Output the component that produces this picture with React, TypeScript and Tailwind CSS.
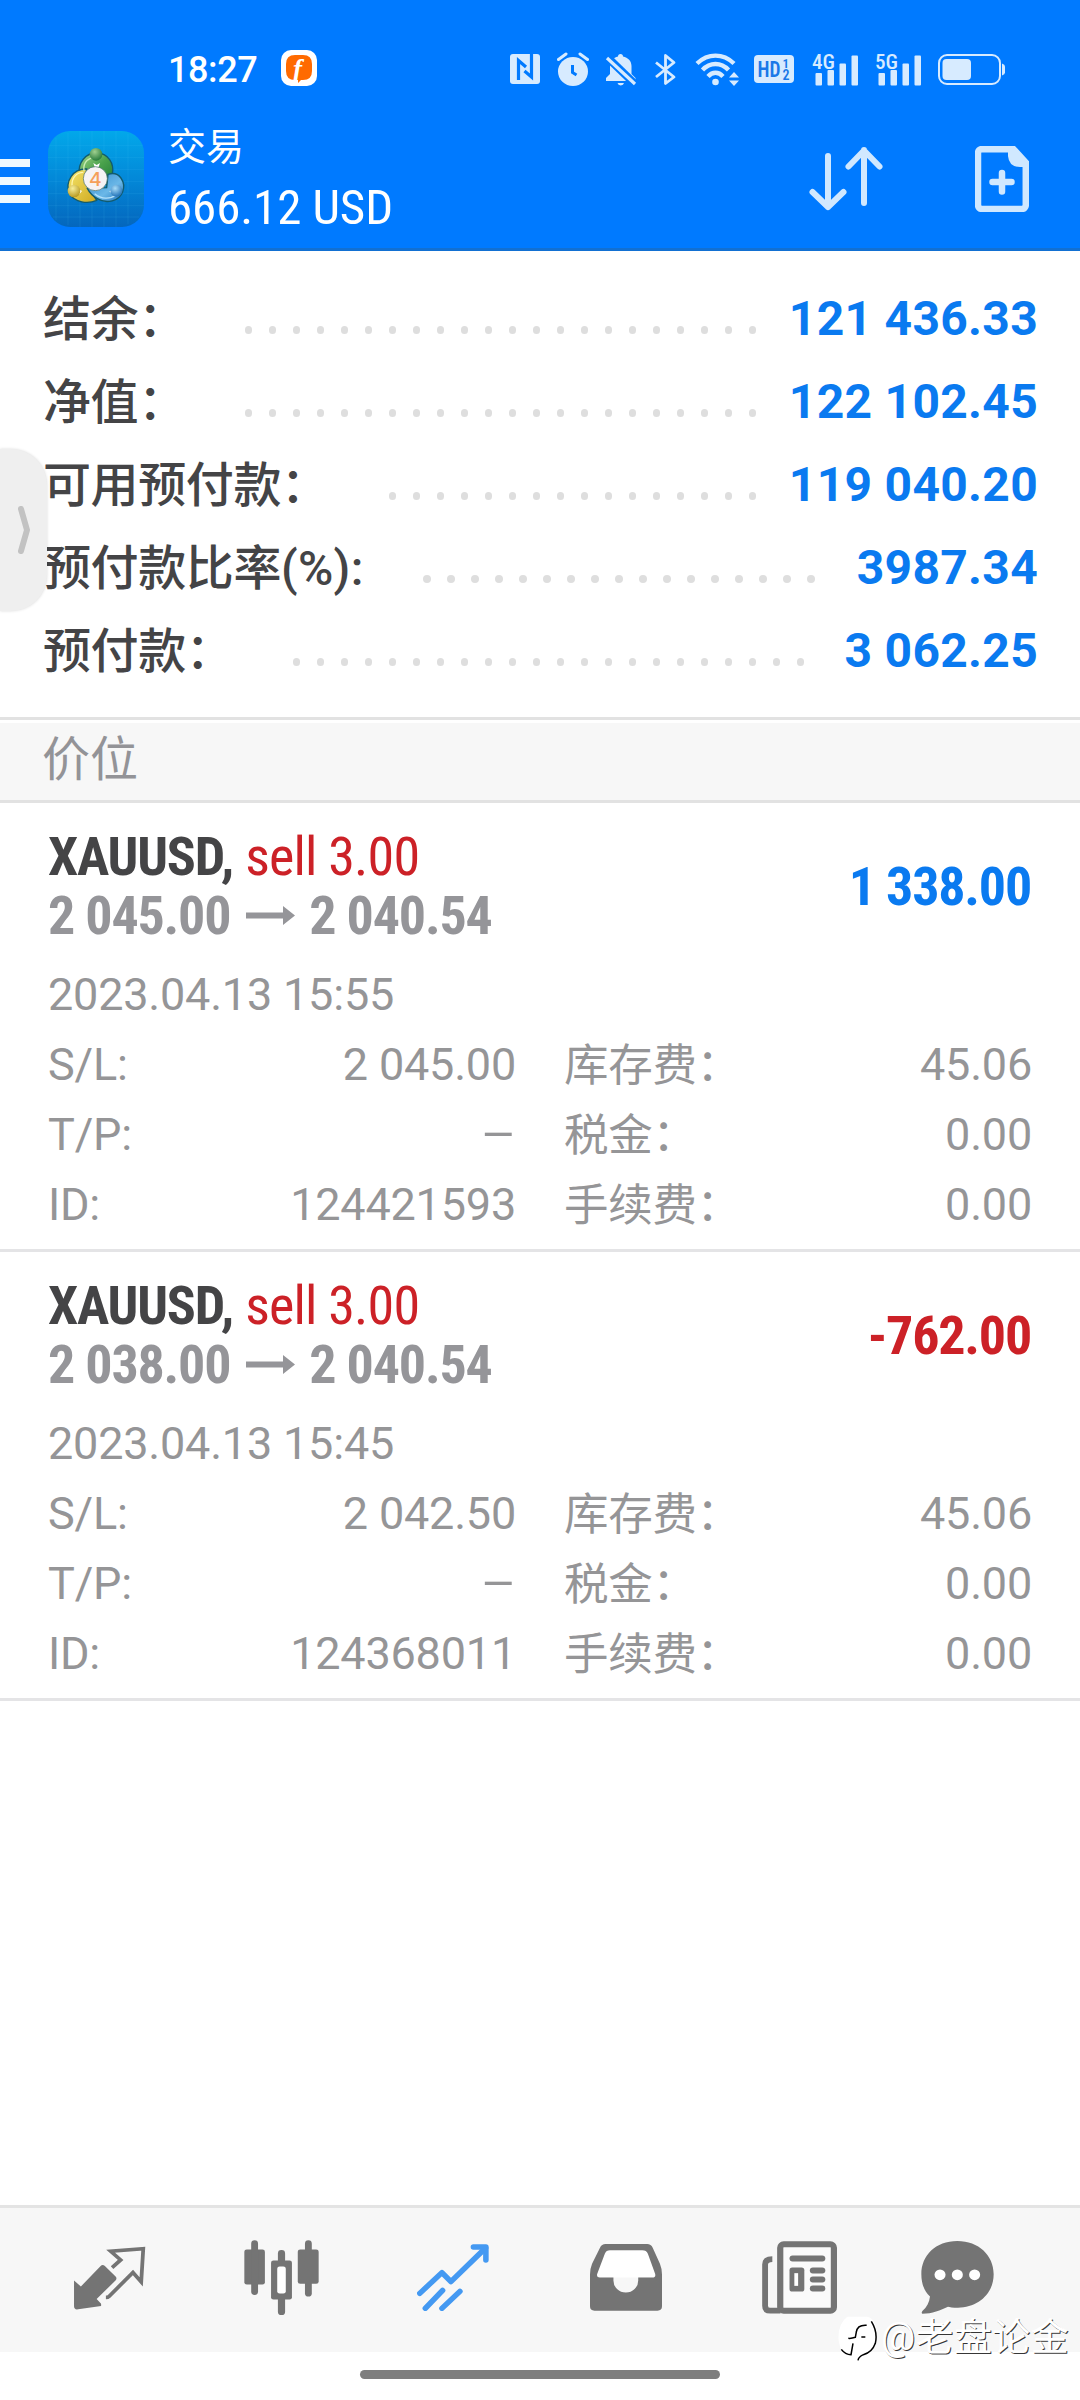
import type { ReactNode } from 'react';

const balances = [
  { label: '结余：', value: '121 436.33', dots: 22, width: 'w-[201.5px]' },
  { label: '净值：', value: '122 102.45', dots: 22, width: 'w-[201.5px]' },
  { label: '可用预付款：', value: '119 040.20', dots: 16, width: 'w-[345.5px]' },
  { label: '预付款比率', suffix: '(%):', value: '3987.34', dots: 17, width: 'w-[380px]' },
  { label: '预付款：', value: '3 062.25', dots: 22, width: 'w-[249.5px]' },
];

const positions = [
  {
    symbol: 'XAUUSD',
    side: 'sell 3.00',
    open: '2 045.00',
    current: '2 040.54',
    profit: '1 338.00',
    time: '2023.04.13 15:55',
    sl: '2 045.00',
    tp: '–',
    id: '124421593',
    swap: '45.06',
    tax: '0.00',
    fee: '0.00',
  },
  {
    symbol: 'XAUUSD',
    side: 'sell 3.00',
    open: '2 038.00',
    current: '2 040.54',
    profit: '-762.00',
    time: '2023.04.13 15:45',
    sl: '2 042.50',
    tp: '–',
    id: '124368011',
    swap: '45.06',
    tax: '0.00',
    fee: '0.00',
  },
];

function NfcIcon() {
  return (
    <svg className="w-[30px] h-[30px]" viewBox="0 0 30 30" fill="none">
      <rect width="30" height="30" rx="3" fill="#d7ebff" />
      <path d="M8.5 26V6.5L16 13" stroke="#007aff" strokeWidth="3.2" />
      <path d="M21.5 0V23L14.5 17" stroke="#007aff" strokeWidth="3.2" />
    </svg>
  );
}

function AlarmIcon() {
  return (
    <svg className="w-8 h-[34px] ml-[17px]" viewBox="0 0 32 34" fill="none">
      <ellipse cx="16" cy="19.5" rx="15" ry="14.5" fill="#d7ebff" />
      <path d="M1.5 7.5L9 2M30.5 7.5L23 2" stroke="#d7ebff" strokeWidth="3" strokeLinecap="round" />
      <path d="M15.5 13V20.5L19.5 23" stroke="#007aff" strokeWidth="3" />
    </svg>
  );
}

function MutedIcon() {
  return (
    <svg className="w-8 h-[33px] ml-4" viewBox="0 0 32 33" fill="none">
      <path d="M1 28v-3l4-4v-8c0-5 3.5-8.5 8-9.5a2.5 2.5 0 0 1 5 0c5 1 8.5 4.5 8.5 9.5v8l4 4v3z" fill="#d7ebff" />
      <path d="M12.5 30h6.5a3.3 3 0 0 1-6.5 0z" fill="#d7ebff" />
      <path d="M2 4L31 32" stroke="#007aff" strokeWidth="8" />
      <path d="M2 5L30 31" stroke="#d7ebff" strokeWidth="3.2" />
    </svg>
  );
}

function BluetoothIcon() {
  return (
    <svg className="w-[23px] h-[33px] ml-[17px]" viewBox="0 0 23 33" fill="none">
      <path d="M2 9.5L20 24L11.5 30.5V2.5L20 9.5L2 24" stroke="#d7ebff" strokeWidth="2.8" strokeLinejoin="round" />
    </svg>
  );
}

function WifiIcon() {
  return (
    <svg className="w-11 h-[34px] ml-[18px]" viewBox="0 0 44 34" fill="none">
      <path d="M2 11.5C13 1 28 1 39 11.5" stroke="#d7ebff" strokeWidth="4.4" />
      <path d="M7.5 18C15 10 26 10 33.5 18" stroke="#d7ebff" strokeWidth="4.4" />
      <path d="M13 24.5C17.5 19.5 23.5 19.5 28 24.5" stroke="#d7ebff" strokeWidth="4.4" />
      <circle cx="20.5" cy="30" r="3.3" fill="#d7ebff" />
      <path d="M34 25.5h10l-5-5.5zM34 28.5h10l-5 5.5z" fill="#d7ebff" />
    </svg>
  );
}

function HdIcon() {
  return (
    <svg className="w-10 h-7 ml-[15px]" viewBox="0 0 40 28">
      <rect width="40" height="28" rx="4" fill="#d7ebff" />
      <g fill="#1a78e8" fontFamily="Roboto Condensed" fontWeight="600">
        <text x="3.5" y="22" fontSize="22.5" textLength="23" lengthAdjust="spacingAndGlyphs">HD</text>
        <text x="28.5" y="13" fontSize="13">1</text>
        <text x="28.5" y="25" fontSize="14">2</text>
      </g>
    </svg>
  );
}

function SignalIcon({ label }: { label: string }) {
  return (
    <svg className="w-12 h-[45px]" viewBox="0 -6 48 45" fill="#d7ebff">
      <text x="0" y="15.5" fontFamily="Roboto Condensed" fontWeight="500" fontSize="20" textLength="23" lengthAdjust="spacingAndGlyphs">
        {label}
      </text>
      <rect x="3.5" y="20" width="6.5" height="12.5" rx="1" />
      <rect x="15.5" y="17" width="6.5" height="15.5" rx="1" />
      <rect x="27.5" y="10.5" width="6.5" height="22" rx="1" />
      <rect x="39.5" y="2.5" width="6.5" height="30" rx="1" />
    </svg>
  );
}

function BatteryIcon() {
  return (
    <svg className="w-[67px] h-[31px] ml-[15px]" viewBox="0 0 67 31">
      <rect x="1" y="1" width="61" height="29" rx="8" fill="none" stroke="#d7ebff" strokeWidth="2" />
      <rect x="4.5" y="5" width="28.5" height="21" rx="4" fill="#d7ebff" />
      <path d="M64 9.5q3 1 3 3v6q0 2-3 3z" fill="#d7ebff" />
    </svg>
  );
}

function FollowMeIcon() {
  return (
    <svg className="w-9 h-9 -mt-1 ml-[25px]" viewBox="0 0 36 36">
      <rect width="36" height="36" rx="10" fill="#fff" />
      <path d="M14 5h8q9 0 9 9v7q0 9-9 9h-2l-3 3v-3h-3q-9 0-9-9v-7q0-9 9-9z" fill="#ff6a00" />
      <text x="12" y="28" fontFamily="Liberation Serif" fontStyle="italic" fontWeight="700" fontSize="27" fill="#fff">
        f
      </text>
    </svg>
  );
}

function AppLogo() {
  return (
    <svg className="w-24 h-24" viewBox="0 0 288 288">
      <defs>
        <linearGradient id="tile" x1="0" y1="0" x2="0" y2="1">
          <stop offset="0" stopColor="#02a8ea" />
          <stop offset="0.5" stopColor="#0388d8" />
          <stop offset="1" stopColor="#0466bd" />
        </linearGradient>
        <linearGradient id="green" x1="0" y1="0" x2="1" y2="1">
          <stop offset="0" stopColor="#a5d68a" />
          <stop offset="0.5" stopColor="#4aa24c" />
          <stop offset="1" stopColor="#1f7a35" />
        </linearGradient>
        <linearGradient id="gold" x1="0" y1="0" x2="1" y2="1">
          <stop offset="0" stopColor="#f5e56b" />
          <stop offset="1" stopColor="#cfa91f" />
        </linearGradient>
        <linearGradient id="azure" x1="0" y1="0" x2="1" y2="1">
          <stop offset="0" stopColor="#2f86c9" />
          <stop offset="0.6" stopColor="#6bb8e8" />
          <stop offset="1" stopColor="#1b6fb8" />
        </linearGradient>
        <radialGradient id="greenBall" cx="0.4" cy="0.3" r="0.7">
          <stop offset="0" stopColor="#9fd08f" />
          <stop offset="1" stopColor="#2a7c3c" />
        </radialGradient>
        <radialGradient id="goldBall" cx="0.4" cy="0.3" r="0.7">
          <stop offset="0" stopColor="#f7ee9a" />
          <stop offset="1" stopColor="#b89a22" />
        </radialGradient>
        <radialGradient id="azureBall" cx="0.4" cy="0.3" r="0.7">
          <stop offset="0" stopColor="#a8dcf8" />
          <stop offset="1" stopColor="#2373b8" />
        </radialGradient>
      </defs>
      <rect width="288" height="288" rx="66" fill="url(#tile)" />
      <path d="M24 20V268M60 5V283M96 0V288M132 0V288M168 0V288M204 0V288M240 8V280M4 44H284M0 80H288M0 116H288M0 152H288M0 188H288M0 224H288M14 258H274" stroke="#5fd0ff" strokeOpacity="0.16" strokeWidth="2" />
      <g stroke="#125b6d" strokeWidth="4">
        <path d="M94 128C90 95 112 66 146 66C180 66 200 98 193 130C190 146 184 154 176 160L112 116Z" fill="url(#green)" />
        <path d="M64 188C50 150 76 112 116 114L110 152L146 208C120 220 80 215 64 188Z" fill="url(#gold)" />
        <path d="M180 130C216 118 234 156 224 182C214 210 176 220 148 203C134 195 124 184 118 172L176 170Z" fill="url(#azure)" />
      </g>
      <path d="M108 120C104 92 124 78 144 80" stroke="#c9ecb4" strokeWidth="4" fill="none" />
      <path d="M72 166C70 138 88 124 106 124" stroke="#fff6ae" strokeWidth="4" fill="none" />
      <path d="M140 188C160 206 188 204 204 192" stroke="#b5e2fb" strokeWidth="4" fill="none" />
      <path d="M136 96l10 6 10-6-4 12h-12zM90 172l12 8-8 10zM196 170l-12 12 12 6z" fill="#fff" />
      <circle cx="144" cy="70" r="19" fill="url(#greenBall)" />
      <circle cx="78" cy="180" r="19" fill="url(#goldBall)" />
      <circle cx="205" cy="179" r="18" fill="url(#azureBall)" />
      <circle cx="142" cy="143" r="36" fill="#f6f3f4" stroke="#3f6a63" strokeWidth="2" />
      <text x="142" y="164" textAnchor="middle" fontFamily="Inter" fontWeight="500" fontSize="58" fill="#f5a05a">
        4
      </text>
    </svg>
  );
}

function StatusBar() {
  return (
    <div className="h-12 mt-[46px] pl-[168px] flex items-center">
      <span className="w-[88px] text-[36px] leading-[48px] font-medium tracking-[-0.4px] whitespace-nowrap">18:27</span>
      <FollowMeIcon />
      <div className="ml-[193px] -mt-[2px] flex items-center">
        <NfcIcon />
        <AlarmIcon />
        <MutedIcon />
        <BluetoothIcon />
        <WifiIcon />
        <HdIcon />
        <div className="ml-[18px] flex gap-[15px]">
          <SignalIcon label="4G" />
          <SignalIcon label="5G" />
        </div>
        <BatteryIcon />
      </div>
    </div>
  );
}

function Toolbar() {
  return (
    <div className="h-[138px] mt-4 flex items-center">
      <div className="w-[30px] mt-1 flex flex-col gap-[10px]">
        <div className="h-2 bg-[#eef9ff]" />
        <div className="h-2 bg-[#eef9ff]" />
        <div className="h-2 bg-[#eef9ff]" />
      </div>
      <div className="ml-[18px]">
        <AppLogo />
      </div>
      <div className="ml-6">
        <h1 className="text-[38px] leading-[55px]">交易</h1>
        <p className="mt-[2px] font-['Roboto_Condensed'] text-[49px] leading-[62px] tracking-[-0.1px] whitespace-nowrap">666.12 USD</p>
      </div>
      <svg className="w-[76px] h-[66px] ml-auto" viewBox="0 0 76 66" fill="none" stroke="#d0e8ff" strokeWidth="6" strokeLinecap="round" strokeLinejoin="round">
        <path d="M20 10V61M4.5 46L20 61L35.5 46" />
        <path d="M56 57V4M40.5 20.5L56 4.5L71.5 20.5" />
      </svg>
      <svg className="w-[54px] h-[66px] ml-[91px] mr-[51px]" viewBox="0 0 54 66" fill="none" stroke="#d0e8ff" strokeWidth="6.5">
        <path d="M7 3.200H38.500L50.800 16.500V59a4 4 0 0 1-4 4H7a4 4 0 0 1-4-4V7a4 4 0 0 1 4-4z" />
        <path d="M33 3V10q1 11 12 11h8v-6L39 1z" fill="#d0e8ff" stroke="none" />
        <path d="M17.5 36H36.5M27 27V45.5" strokeLinecap="round" />
      </svg>
    </div>
  );
}

function Balances() {
  return (
    <section className="pt-[26px] pb-[25px] pl-[43px] pr-[42px]">
      {balances.map((row) => (
        <div key={row.label} className="h-[83px] flex items-center text-[48px] leading-[83px] whitespace-nowrap">
          <span className={`${row.width} shrink-0 mt-[2px] text-[#444446] font-[450] tracking-[-0.4px]`}>
            {row.label}
            {row.suffix && <span className="font-medium tracking-[0.3px]">{row.suffix}</span>}
          </span>
          <div className="flex gap-[16.5px] mt-[23px]">
            {Array.from({ length: row.dots }, (_, i) => (
              <i key={i} className="size-[7.5px] rounded-full bg-[#dedede]" />
            ))}
          </div>
          <span className="ml-auto font-bold text-[#0a7af0] tracking-[0.3px]">{row.value}</span>
        </div>
      ))}
    </section>
  );
}

function Detail({ label, value }: { label: ReactNode; value: ReactNode }) {
  return (
    <div className="h-[70px] flex justify-between">
      <span>{label}</span>
      <span>{value}</span>
    </div>
  );
}

function Caption({ children }: { children: string }) {
  return <span className="inline-block pt-px text-[44.5px] tracking-[-0.3px]">{children}</span>;
}

function Position({ item }: { item: (typeof positions)[number] }) {
  const loss = item.profit.startsWith('-');
  return (
    <article className="h-[449px] pt-6 pl-12 pr-12 border-b-[3px] border-[#e4e4e6] whitespace-nowrap">
      <div className="flex justify-between items-center font-['Roboto_Condensed'] text-[54px] leading-[59px] tracking-[-1.2px]">
        <div>
          <p>
            <b className="font-bold text-[#444446]">{item.symbol},</b>{' '}
            <span className="ml-px text-[#cc2127] tracking-[-0.8px]">{item.side}</span>
          </p>
          <p className="flex items-center font-bold text-[#959599]">
            {item.open}
            <svg className="w-[49px] h-[19px] ml-4 mr-[14px]" viewBox="0 0 49 19" fill="#959599">
              <path d="M0 6.5H37V0L49 9.5L37 19V12.5H0z" />
            </svg>
            {item.current}
          </p>
        </div>
        <span className={`mr-px font-bold ${loss ? 'text-[#cc2127]' : 'text-[#0a7af0]'}`}>{item.profit}</span>
      </div>

      <div className="mt-[15px] text-[45px] leading-[70px] font-normal tracking-[-0.2px] text-[#959597]">
        <p>{item.time}</p>
        <div className="grid grid-cols-[468px_468px] gap-x-12">
          <Detail label="S/L:" value={item.sl} />
          <Detail label={<Caption>库存费：</Caption>} value={item.swap} />
          <Detail label="T/P:" value={<span className="inline-block origin-right scale-x-[1.22]">{item.tp}</span>} />
          <Detail label={<Caption>税金：</Caption>} value={item.tax} />
          <Detail label="ID:" value={item.id} />
          <Detail label={<Caption>手续费：</Caption>} value={item.fee} />
        </div>
      </div>
    </article>
  );
}

function TabBar() {
  return (
    <nav className="h-[147px] pl-[73px] pb-[5px] flex items-center border-t-[3px] border-[#e4e4e4] bg-[#f7f7f7] text-[#747474]">
      {/* Quotes */}
      <svg className="w-[73px] h-16" viewBox="213 168 213 193" preserveAspectRatio="none">
        <path d="M216 272L236 290L293 229Q299 222 306 228L338 261Q342 266 337 272L282 328L295 342V349L228 359Q216 361 216 350Z" fill="currentColor" />
        <path d="M327 233L352 210L323 184L418 176L412 276L388 248L318 320Q315 323 309 323" fill="none" stroke="currentColor" strokeWidth="11" />
      </svg>
      {/* Charts */}
      <svg className="w-[75px] h-[75px] ml-[98px]" viewBox="708 152 219 224" preserveAspectRatio="none" fill="currentColor">
        <rect x="709" y="180" width="60" height="105" rx="7" />
        <rect x="729" y="153" width="20" height="163" rx="10" />
        <rect x="865" y="180" width="61" height="103" rx="7" />
        <rect x="886" y="153" width="20" height="168" rx="10" />
        <rect x="807" y="182" width="21" height="50" rx="10" />
        <rect x="807" y="320" width="21" height="56" rx="10" />
        <rect x="787" y="213" width="61" height="117" rx="7" />
        <rect x="805" y="231" width="25" height="81" rx="7" fill="#fff" />
      </svg>
      {/* Trade */}
      <svg className="w-[72px] h-[67px] ml-[98px]" viewBox="1213 160 208 201" preserveAspectRatio="none" fill="none" stroke="#4499f2" strokeWidth="16" strokeLinecap="round" strokeLinejoin="round">
        <path d="M1221 308L1285 246L1311 273L1411 172" />
        <path d="M1376 169H1412V208" />
        <path d="M1237 353L1287 299M1285 353L1337 302" />
      </svg>
      {/* History */}
      <svg className="w-[72px] h-[67px] ml-[101px]" viewBox="147 161 209 200" preserveAspectRatio="none">
        <path d="M205 180H299Q311 180 315 190L336 250Q339 261 328 261H175Q165 261 168 250L190 190Q194 180 205 180z" fill="#fff" />
        <path fillRule="evenodd" fill="currentColor" d="M192 161H313Q324 161 329 172L350 220Q356 235 356 252V347Q356 360 343 360H160Q147 360 147 347V252Q147 235 153 220L176 172Q181 161 192 161zM205 180H299Q311 180 315 190L336 250Q339 261 328 261H287V270a36 36 0 0 1-72 0V261H175Q165 261 168 250L190 190Q194 180 205 180z" />
      </svg>
      {/* News */}
      <svg className="w-[75px] h-[73px] ml-[100px]" viewBox="646 152 218 218" preserveAspectRatio="none" fill="currentColor">
        <path d="M676 206Q655 206 655 222V345Q655 360 670 360H700" fill="none" stroke="currentColor" strokeWidth="17" />
        <rect x="699" y="162" width="156" height="198" rx="10" fill="#fafafa" stroke="currentColor" strokeWidth="18" />
        <rect x="726" y="195" width="104" height="18" rx="9" />
        <rect x="726" y="231" width="43" height="72" rx="8" />
        <rect x="740" y="248" width="11" height="38" fill="#fff" />
        <rect x="785" y="231" width="45" height="18" rx="9" />
        <rect x="785" y="258" width="45" height="18" rx="9" />
        <rect x="785" y="285" width="45" height="18" rx="9" />
      </svg>
      {/* Messages */}
      <svg className="w-[73px] h-[73px] ml-[84px]" viewBox="1108 152 211 218" preserveAspectRatio="none" fill="currentColor">
        <path d="M1213 152C1275 152 1318 195 1318 251C1318 310 1272 351 1215 351C1200 351 1190 349 1186 348C1165 358 1140 369 1112 369Q1108 367 1112 361C1125 350 1132 335 1134 318C1117 302 1109 278 1109 251C1109 195 1150 152 1213 152z" />
        <circle cx="1163" cy="253" r="16" fill="#fff" />
        <circle cx="1213" cy="253" r="16" fill="#fff" />
        <circle cx="1263" cy="253" r="16" fill="#fff" />
      </svg>
    </nav>
  );
}

function Watermark() {
  return (
    <div className="absolute left-[838px] top-[2312px] h-[50px] flex items-center">
      <svg className="w-[39px] h-[46px] mt-1" viewBox="52 56 117 138" fill="none">
        <path d="M80 58H140Q168 66 168 110Q168 160 130 174L110 190L108 174H85Q58 165 54 130Q50 80 80 58z" fill="#fff" />
        <path d="M152 72Q172 104 164 138Q154 166 128 172Q114 178 112 189M138 84Q110 82 107 104L104 120Q92 124 83 123M122 119H134M62 156Q74 172 91 172L97 138" stroke="#000" strokeWidth="4.5" />
      </svg>
      <span className="ml-1 text-[38px] leading-[50px] font-normal tracking-[0.4px] text-white whitespace-nowrap [text-shadow:1px_1px_0_rgba(0,0,0,0.8)]">
        @老盘论金
      </span>
    </div>
  );
}

export default function App() {
  return (
    <div className="relative w-[1080px] h-[2400px] overflow-hidden flex flex-col bg-white font-['Roboto','Noto_Sans_CJK_SC',sans-serif]">
      <header className="h-[251px] shrink-0 bg-[#007aff] border-b-[3px] border-[#1270d2] text-white">
        <StatusBar />
        <Toolbar />
      </header>

      <Balances />

      <div className="border-t-[3px] border-[#e2e2e2] pt-[3px]">
        <h2 className="h-20 pl-[42px] bg-[#f7f7f7] border-b-[3px] border-[#e2e2e2] text-[48px] leading-[73px] text-[#939397]">价位</h2>
      </div>

      {positions.map((item) => (
        <Position key={item.id} item={item} />
      ))}

      <footer className="mt-auto">
        <TabBar />
        <div className="h-12 pt-[18px] flex justify-center">
          <div className="w-[360px] h-[9px] rounded-full bg-[#7e7e7e]" />
        </div>
      </footer>

      {/* Edge panel handle */}
      <div className="absolute left-0 top-[449px] w-[47px] h-[162px] rounded-r-[36px] bg-[#efefef] shadow-[0_0_3px_rgba(0,0,0,0.15)]">
        <svg className="w-3 h-12 ml-[18px] mt-[57px]" viewBox="0 0 12 48" fill="none">
          <path d="M3 3L9 24L3 45" stroke="#c2c2c2" strokeWidth="6" strokeLinecap="round" strokeLinejoin="round" />
        </svg>
      </div>

      <Watermark />
    </div>
  );
}
